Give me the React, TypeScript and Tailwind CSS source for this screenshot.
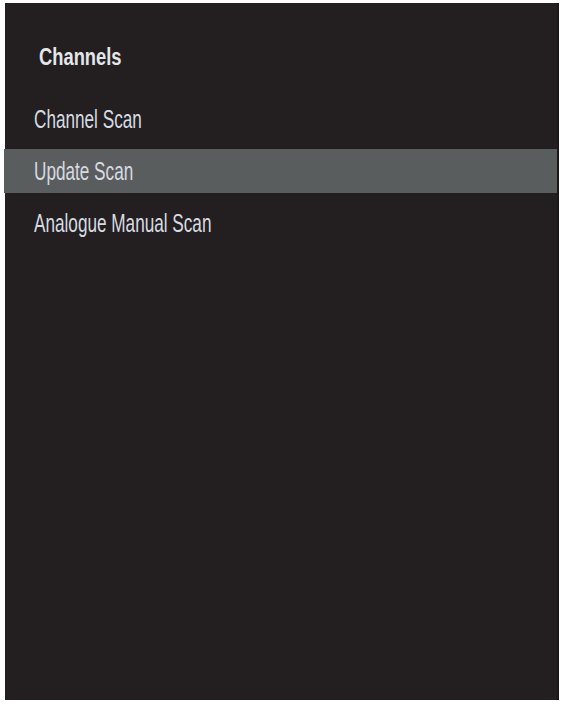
const items = ["Channel Scan", "Update Scan", "Analogue Manual Scan"];

export default function App() {
    const selected = 1;

    return (
        <div className="w-[564px] h-[704px] bg-white pt-[3px] pl-[5px] pr-[5px] pb-[4px]">
            <div
                className="h-full bg-[#231f20] border-r-2 border-[#1a1718]"
                style={{ fontFamily: '"Liberation Sans", Arial, sans-serif' }}
            >
                <h2 className="pl-[34px] pt-[38px] h-[94px] text-[23.5px] leading-[32px] font-bold text-[#e4e7ea]">
                    <span className="inline-block origin-left scale-x-[0.78]">Channels</span>
                </h2>
                <ul className="flex flex-col gap-2">
                    {items.map((label, i) => (
                        <li
                            key={label}
                            className={`h-[44px] flex items-center pl-[29px] pt-[1px] text-[26px] text-[#d6dbe0] ${
                                i === selected ? "bg-[#5a5d5d] -ml-[1px] pl-[30px]" : ""
                            }`}
                        >
                            <span className="inline-block origin-left scale-x-[0.66] whitespace-nowrap">{label}</span>
                        </li>
                    ))}
                </ul>
            </div>
        </div>
    );
}
